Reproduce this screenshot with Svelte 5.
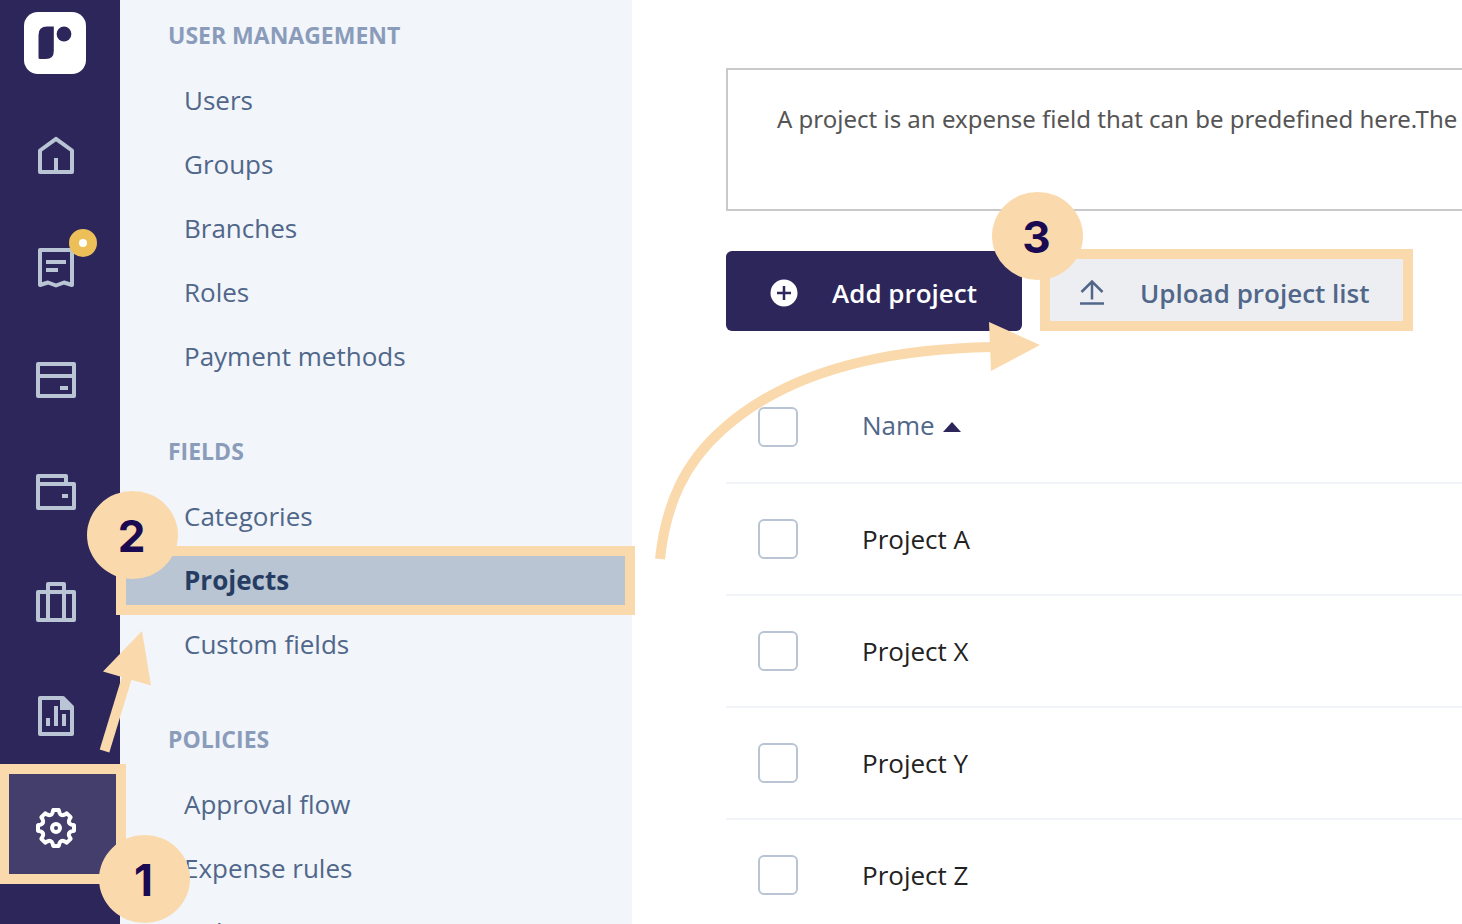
<script lang="ts">
	type Icon = 'home' | 'receipt' | 'card' | 'wallet' | 'case' | 'report' | 'gear';

	const rail: { icon: Icon; label: string; active?: boolean; notify?: boolean }[] = [
		{ icon: 'home', label: 'Home' },
		{ icon: 'receipt', label: 'Expenses', notify: true },
		{ icon: 'card', label: 'Cards' },
		{ icon: 'wallet', label: 'Wallet' },
		{ icon: 'case', label: 'Trips' },
		{ icon: 'report', label: 'Reports' },
		{ icon: 'gear', label: 'Settings', active: true }
	];

	const sections = [
		{ title: 'USER MANAGEMENT', items: ['Users', 'Groups', 'Branches', 'Roles', 'Payment methods'] },
		{ title: 'FIELDS', items: ['Categories', 'Projects', 'Custom fields'] },
		{ title: 'POLICIES', items: ['Approval flow', 'Expense rules', 'Rules'] }
	];
	const current = 'Projects';

	let ascending = $state(true);
	let projects = $state([
		{ name: 'Project A', checked: false },
		{ name: 'Project X', checked: false },
		{ name: 'Project Y', checked: false },
		{ name: 'Project Z', checked: false }
	]);
	const sorted = $derived(ascending ? projects : [...projects].reverse());
	const allChecked = $derived(projects.every((p) => p.checked));

	function toggleAll() {
		const next = !allChecked;
		for (const p of projects) p.checked = next;
	}

	// outline of the settings cog: eight teeth around (20, 20)
	function cogPath() {
		const pts: string[] = [];
		for (let i = 0; i < 8; i++) {
			const a = (i * Math.PI) / 4 - Math.PI / 2;
			const at = (r: number, d: number) =>
				`${(20 + r * Math.cos(a + d)).toFixed(2)} ${(20 + r * Math.sin(a + d)).toFixed(2)}`;
			pts.push(`${i ? 'L' : 'M'}${at(18.2, -0.15)} L${at(18.2, 0.15)} L${at(15.8, 0.22)} Q${at(12.6, Math.PI / 8)} ${at(15.8, Math.PI / 4 - 0.22)}`);
		}
		return pts.join(' ') + ' Z';
	}
</script>

<div class="app">
	<nav class="rail" aria-label="Main">
		<a class="logo" href="#home" aria-label="Home page">
			<svg width="62" height="62" viewBox="0 0 62 62">
				<rect width="62" height="62" rx="14" fill="#fff" />
				<path d="M23 14.5h6.8v24.500q0 8-8 8H16q-1.500 0-1.500-1.500V23q0-8.500 8.500-8.500z" fill="#2c265b" />
				<circle cx="40" cy="22" r="7.400" fill="#2c265b" />
			</svg>
		</a>
		{#each rail as item}
			<a class="rail-item" class:active={item.active} href="#{item.icon}" aria-label={item.label}>
				<svg class="rail-icon" viewBox="0 0 40 40">
					{#if item.icon === 'home'}
						<path d="M4 36V14.500L20 2.800l16 11.700V36z M20 36V22" />
					{:else if item.icon === 'receipt'}
						<path d="M4 37V2h32v35l-8-2.500-8 3-8-3z M10 14h20 M10 22h12" />
					{:else if item.icon === 'card'}
						<path d="M2 4h36v32H2z M2 16h36 M24 28h8" />
					{:else if item.icon === 'wallet'}
						<path d="M2 4h28v8h8v24H2z M2 12h30 M26 24h6" />
					{:else if item.icon === 'case'}
						<path d="M2 8h36v28H2z M12 36V0h16v36" />
					{:else if item.icon === 'report'}
						<path d="M4 2h23l9 9v27H4z M12 30v-8 M20 30V10 M28 30V18" />
						<path class="fill" d="M24 2h4l8 8v4H24z" />
					{:else}
						<path d={cogPath()} />
						<circle cx="20" cy="20" r="4" />
					{/if}
				</svg>
				{#if item.notify}<span class="dot"></span>{/if}
				{#if item.active}
					<span class="frame frame-rail"></span>
					<span class="step step-rail">1</span>
				{/if}
			</a>
		{/each}
	</nav>

	<aside class="menu">
		{#each sections as section}
			<section>
				<h2>{section.title}</h2>
				<ul>
					{#each section.items as item}
						<li>
							<a class:current={item === current} href="#{item.toLowerCase().replace(' ', '-')}">{item}</a>
							{#if item === current}
								<span class="frame frame-menu"></span>
								<span class="step step-menu">2</span>
							{/if}
						</li>
					{/each}
				</ul>
			</section>
		{/each}
	</aside>

	<main>
		<p class="info">A project is an expense field that can be predefined here.The</p>

		<div class="actions">
			<button class="primary" type="button">
				<svg width="28" height="28" viewBox="0 0 28 28">
					<circle cx="14" cy="14" r="13.500" fill="#fff" />
					<path d="M14 7v14M7 14h14" stroke="#2c265b" stroke-width="2.500" />
				</svg>
				Add project
			</button>
			<div class="upload">
				<button class="secondary" type="button">
					<svg width="28" height="28" viewBox="0 0 28 28" fill="none" stroke="#50678a" stroke-width="2.500">
						<path d="M14 20.500V3M3.500 13L14 2.500 24.500 13M2 24.500h24" />
					</svg>
					Upload project list
				</button>
				<span class="frame frame-upload"></span>
				<span class="step step-upload">3</span>
			</div>
		</div>

		<table>
			<thead>
				<tr>
					<th class="check"><input type="checkbox" aria-label="Select all projects" checked={allChecked} onchange={toggleAll} /></th>
					<th>
						<button class="sort" type="button" onclick={() => (ascending = !ascending)}>
							Name
							<svg class:down={!ascending} width="18" height="10" viewBox="0 0 18 10"><path d="M0 10L9 0l9 10z" fill="#2c265b" /></svg>
						</button>
					</th>
				</tr>
			</thead>
			<tbody>
				{#each sorted as project}
					<tr>
						<td class="check"><input type="checkbox" aria-label={project.name} bind:checked={project.checked} /></td>
						<td>{project.name}</td>
					</tr>
				{/each}
			</tbody>
		</table>
	</main>

	<svg class="arrows" width="1050" height="760" viewBox="0 0 1050 760" aria-hidden="true">
		<path d="M104.500 751L128 674" class="line" />
		<path d="M142 631L103 671.500L151 685.500z" class="head" />
		<path d="M660 559C666 502 686 462 722 430C785 373 880 349 992 347" class="line" />
		<path d="M1040 345L989 322L991 371z" class="head" />
	</svg>
</div>

<style>
	:global(body) {
		background: #fff;
	}
	.app {
		position: relative;
		display: grid;
		grid-template-columns: 120px 512px minmax(0, 1fr);
		height: 100vh;
		overflow: hidden;
		font-family: "Open Sans", "Noto Sans", sans-serif;
		font-size: 26px;
		line-height: 32px;
		color: #50678a;
	}
	a {
		color: inherit;
		text-decoration: none;
	}

	.rail {
		position: relative;
		z-index: 1;
		background: #2c265b;
	}
	.logo {
		display: block;
		height: 88px;
		padding: 12px 0 0 24px;
	}
	.rail-item {
		position: relative;
		display: flex;
		align-items: center;
		justify-content: center;
		height: 112px;
		padding-right: 8px;
	}
	.rail-item.active {
		background: #433e6c;
	}
	.rail-icon {
		width: 40px;
		height: 40px;
		overflow: visible;
		fill: none;
		stroke: #b9c5d5;
		stroke-width: 4;
		stroke-linejoin: round;
	}
	.rail-icon .fill {
		fill: #b9c5d5;
		stroke: none;
	}
	.active .rail-icon {
		stroke: #fff;
	}
	.dot {
		position: absolute;
		top: 17px;
		left: 69px;
		box-sizing: border-box;
		width: 28px;
		height: 28px;
		border: 10px solid #ecbf58;
		border-radius: 50%;
		background: #fff;
	}

	.menu {
		padding-top: 19px;
		background: #f2f5fa;
	}
	section {
		margin-bottom: 47px;
	}
	h2 {
		margin: 0 0 17px;
		padding-left: 48px;
		font-size: 23px;
		font-weight: 700;
		line-height: 32px;
		color: #8a9cba;
	}
	ul {
		margin: 0;
		padding: 0;
		list-style: none;
	}
	li {
		position: relative;
	}
	li a {
		display: block;
		padding: 16px 64px;
	}
	li a.current {
		font-weight: 700;
		color: #263c62;
		background: #b9c5d3;
	}

	/* walkthrough markers */
	.frame {
		position: absolute;
		box-sizing: border-box;
		border: 10px solid #fadaad;
		pointer-events: none;
	}
	.frame-rail {
		inset: -8px -6px 0 -1px;
	}
	.frame-menu {
		inset: -2px -3px -3px -4px;
		z-index: 2;
	}
	.frame-upload {
		inset: -2px -2px 0;
	}
	.step {
		position: absolute;
		z-index: 3;
		display: flex;
		align-items: center;
		justify-content: center;
		box-sizing: border-box;
		width: 91px;
		height: 88px;
		padding: 2px 2px 0 0;
		border-radius: 50%;
		background: #fadaad;
		color: #1a0a52;
		font-family: Inter, "Liberation Sans", sans-serif;
		font-size: 44px;
		font-weight: 700;
	}
	.step-rail {
		top: 63px;
		left: 99px;
	}
	.step-menu {
		top: -57px;
		left: -33px;
	}
	.step-upload {
		top: -59px;
		left: -50px;
	}
	.arrows {
		position: absolute;
		top: 0;
		left: 0;
		z-index: 2;
		pointer-events: none;
	}
	.line {
		fill: none;
		stroke: #fadaad;
		stroke-width: 10;
	}
	.head {
		fill: #fadaad;
	}

	main {
		padding: 68px 0 0 94px;
		overflow: hidden;
	}
	.info {
		box-sizing: border-box;
		height: 143px;
		margin: 0;
		padding: 33px 0 0 49px;
		border: 2px solid #c9c9c9;
		border-right: 0;
		font-family: "Noto Sans", "Open Sans", sans-serif;
		font-size: 24px;
		color: #555;
		white-space: nowrap;
		overflow: hidden;
	}
	.actions {
		display: flex;
		gap: 20px;
		margin: 40px 0;
	}
	button {
		display: flex;
		align-items: center;
		border: 0;
		font: inherit;
		color: inherit;
		white-space: nowrap;
		cursor: pointer;
	}
	.primary,
	.secondary {
		gap: 34px;
		height: 80px;
		font-weight: 600;
	}
	.primary {
		width: 296px;
		padding: 4px 0 0 44px;
		border-radius: 6px;
		background: #2c265b;
		color: #fff;
	}
	.upload {
		position: relative;
	}
	.secondary {
		width: 369px;
		padding: 4px 0 0 36px;
		background: #edeef2;
	}

	table {
		width: 100%;
		border-collapse: collapse;
	}
	tr {
		height: 112px;
	}
	th,
	td {
		box-sizing: border-box;
		padding: 0;
		border-bottom: 2px solid #f0f4f9;
		text-align: left;
		font-weight: 400;
	}
	td {
		color: #222;
	}
	.check {
		width: 136px;
		padding-left: 32px;
	}
	input {
		display: block;
		appearance: none;
		box-sizing: border-box;
		width: 40px;
		height: 40px;
		margin: 0;
		border: 2px solid #b9c5d5;
		border-radius: 6px;
		background: #fff;
	}
	input:checked {
		background: #2c265b;
	}
	.sort {
		gap: 8px;
		padding: 0 0 4px;
		background: none;
	}
	.sort svg {
		margin-top: 4px;
	}
	.down {
		transform: rotate(180deg);
	}
</style>
